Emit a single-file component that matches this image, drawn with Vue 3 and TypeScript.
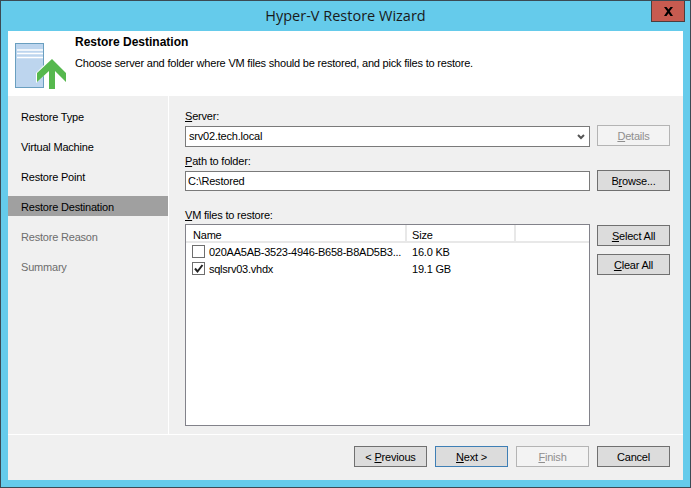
<script setup lang="ts">
const steps = [
  { label: 'Restore Type', state: 'done' },
  { label: 'Virtual Machine', state: 'done' },
  { label: 'Restore Point', state: 'done' },
  { label: 'Restore Destination', state: 'active' },
  { label: 'Restore Reason', state: 'todo' },
  { label: 'Summary', state: 'todo' },
]
const files = [
  { name: '020AA5AB-3523-4946-B658-B8AD5B3...', size: '16.0 KB', checked: false },
  { name: 'sqlsrv03.vhdx', size: '19.1 GB', checked: true },
]
</script>

<template>
  <div class="window">
    <div class="titlebar">
      <span class="title">Hyper-V Restore Wizard</span>
      <button class="close" aria-label="Close">
        <svg width="11" height="9" viewBox="0 0 11 9"><path d="M1 0h2.500l2 2.500 2-2.500H10L6.800 4.300 10 9H7.500l-2-2.700-2 2.700H1l3.200-4.700z" fill="#000"/></svg>
      </button>
    </div>
    <div class="client">
      <header class="banner">
        <svg class="banner-icon" width="52" height="47" viewBox="0 0 52 47">
          <rect x="0.500" y="0.500" width="28" height="44" fill="#bdd5ee" stroke="#6a9fc0"/>
          <path d="M2 7h26M2 10.500h26M2 14.500h26" stroke="#fff" stroke-width="1.500" fill="none"/>
          <path d="M36 15 21 30v10l12-11v17h2V29z" fill="#fff"/>
          <path d="M37 16 51 30v9L40 28v18h-6V28L22 39v-9z" fill="#56b84e"/>
        </svg>
        <div class="banner-text">
          <h1>Restore Destination</h1>
          <p>Choose server and folder where VM files should be restored, and pick files to restore.</p>
        </div>
      </header>
      <div class="middle">
        <nav class="steps">
          <div v-for="s in steps" :key="s.label" class="step" :class="s.state">{{ s.label }}</div>
        </nav>
        <main class="form">
          <label class="lbl server-lbl"><u>S</u>erver:</label>
          <div class="row">
            <div class="field combo">
              <span>srv02.tech.local</span>
              <svg width="8" height="6" viewBox="0 0 8 6"><path d="M1 1l3 3 3-3" fill="none" stroke="#555" stroke-width="2"/></svg>
            </div>
            <button class="btn disabled raised"><u>D</u>etails</button>
          </div>
          <label class="lbl path-lbl"><u>P</u>ath to folder:</label>
          <div class="row">
            <div class="field path"><span>C:\Restored</span></div>
            <button class="btn raised">B<u>r</u>owse...</button>
          </div>
          <label class="lbl vm-lbl"><u>V</u>M files to restore:</label>
          <div class="row list-row">
            <div class="list">
              <div class="list-head">
                <div class="col-name">Name</div>
                <div class="col-size">Size</div>
              </div>
              <div v-for="f in files" :key="f.name" class="list-item">
                <span class="check">
                  <svg v-if="f.checked" width="11" height="11" viewBox="0 0 11 11"><path d="M2 5.500l2.500 3L9.500 2" fill="none" stroke="#222" stroke-width="2"/></svg>
                </span>
                <span class="file-name">{{ f.name }}</span>
                <span class="file-size">{{ f.size }}</span>
              </div>
            </div>
            <div class="side">
              <button class="btn"><u>S</u>elect All</button>
              <button class="btn"><u>C</u>lear All</button>
            </div>
          </div>
        </main>
      </div>
      <footer class="footer">
        <button class="btn">&lt; <u>P</u>revious</button>
        <button class="btn default"><u>N</u>ext &gt;</button>
        <button class="btn disabled"><u>F</u>inish</button>
        <button class="btn">Cancel</button>
      </footer>
    </div>
  </div>
</template>

<style>
html, body { margin: 0; background: #65cbeb; }
</style>

<style scoped>
.window {
  width: 691px;
  height: 488px;
  box-sizing: border-box;
  border: 1px solid #3b4a54;
  background: #65cbeb;
  display: flex;
  flex-direction: column;
  font-family: "Liberation Sans", Arial, sans-serif;
  font-size: 11px;
  letter-spacing: -0.2px;
  color: #000;
  overflow: hidden;
}
.titlebar {
  height: 30px;
  flex: none;
  display: flex;
  justify-content: center;
  position: relative;
}
.title {
  font-family: "Open Sans", sans-serif;
  font-size: 14.500px;
  letter-spacing: 0;
  line-height: 29px;
  color: #1a1a1a;
}
.close {
  position: absolute;
  top: -1px;
  right: 5px;
  width: 34px;
  height: 22px;
  padding: 0;
  box-sizing: border-box;
  border: 1px solid #4c3d3d;
  background: #c75b50;
  display: flex;
  align-items: center;
  justify-content: center;
}
.client {
  margin: 0 7px;
  height: 449px;
  flex: none;
  background: #f0f0f0;
  display: flex;
  flex-direction: column;
}
.banner {
  height: 65px;
  flex: none;
  background: #fff;
  display: flex;
}
.banner-icon { margin: 12px 0 0 7px; flex: none; }
.banner-text { margin-left: 8px; }
.banner h1 {
  margin: 4px 0 0;
  font-size: 12px;
  letter-spacing: 0;
  line-height: 14px;
  font-weight: bold;
}
.banner p {
  margin: 7px 0 0;
  line-height: 14px;
}
.middle {
  height: 338px;
  flex: none;
  display: flex;
}
.steps {
  width: 160px;
  flex: none;
  border-right: 1px solid #fff;
  padding-top: 10px;
  display: flex;
  flex-direction: column;
  gap: 10px;
}
.step {
  height: 20px;
  line-height: 22px;
  padding-left: 13px;
}
.step.active { background: #a0a0a0; }
.step.todo { color: #6d6d6d; }
.form {
  flex: 1;
  padding: 13px 13px 0 16px;
  display: flex;
  flex-direction: column;
}
.lbl { display: block; line-height: 14px; height: 14px; }
.server-lbl { margin-bottom: 3px; }
.path-lbl { margin-top: 7px; margin-bottom: 3px; }
.vm-lbl { margin-top: 17px; margin-bottom: 2px; }
.row { display: flex; gap: 7px; align-items: flex-start; }
.field {
  width: 405px;
  height: 21px;
  box-sizing: border-box;
  border: 1px solid #7a7a7a;
  background: #fff;
  padding: 0 3px;
  line-height: 19px;
  display: flex;
  align-items: center;
  justify-content: space-between;
  flex: none;
}
.field.path { height: 20px; padding-left: 2px; }
.combo svg { margin-right: 1px; }
.btn {
  width: 73px;
  height: 21px;
  padding: 0;
  box-sizing: border-box;
  border: 1px solid #707070;
  background: #dcdcdc;
  font: inherit;
  letter-spacing: inherit;
  color: #000;
  flex: none;
}
.btn.raised { margin-top: -1px; }
.btn.disabled {
  border-color: #b4b4b4;
  background: #f3f3f3;
  color: #8f8f8f;
}
.btn.default { border-color: #3f7fb5; }
.list {
  width: 405px;
  height: 202px;
  box-sizing: border-box;
  border: 1px solid #82828a;
  background: #fff;
  flex: none;
}
.list-head {
  display: flex;
  height: 16px;
  border-bottom: 2px solid #e8e8e8;
}
.col-name, .col-size {
  box-sizing: border-box;
  height: 16px;
  line-height: 20px;
  border-right: 2px solid #e8e8e8;
  padding-left: 7px;
}
.col-name { width: 221px; }
.col-size { width: 109px; padding-left: 5px; }
.list-item {
  height: 17px;
  display: flex;
  align-items: center;
  padding-left: 6px;
}
.check {
  width: 13px;
  height: 13px;
  box-sizing: border-box;
  border: 1px solid #6e6e6e;
  background: #fff;
  display: flex;
  align-items: center;
  justify-content: center;
  flex: none;
}
.file-name { margin-left: 4px; width: 203px; flex: none; white-space: nowrap; letter-spacing: -0.25px; }
.side {
  display: flex;
  flex-direction: column;
  gap: 8px;
  margin-top: 1px;
}
.footer {
  flex: 1;
  border-top: 1px solid #fff;
  display: flex;
  justify-content: flex-end;
  gap: 8px;
  padding: 11px 13px 0 0;
  box-sizing: border-box;
}
</style>
